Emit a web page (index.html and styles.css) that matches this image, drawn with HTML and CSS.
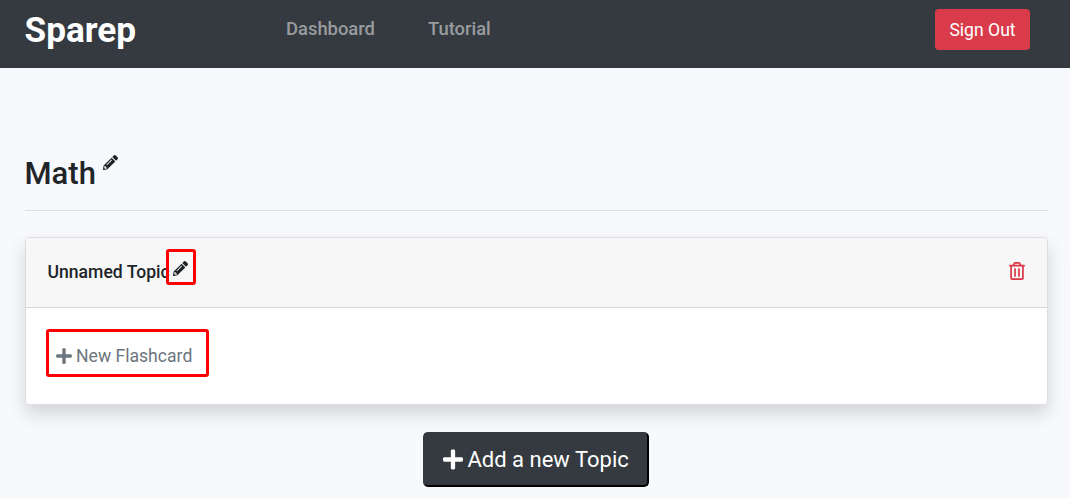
FILE: index.html
```html
<!DOCTYPE html>
<html lang="en">
<head>
<meta charset="utf-8">
<title>Sparep</title>
<link rel="stylesheet" href="styles.css">
</head>
<body>
<svg class="symbols" aria-hidden="true">
  <symbol id="pencil" viewBox="0 0 512 512"><path fill-rule="evenodd" d="M498 142l-46 46c-5 5-13 5-17 0L324 77c-5-5-5-12 0-17l46-46c19-19 49-19 68 0l60 60c19 19 19 49 0 68zm-214-42L22 362 0 484c-3 16 12 30 28 28l122-22 262-262c5-5 5-13 0-17L301 100c-4-5-12-5-17 0zM124 340c-5-6-5-14 0-20l154-154c6-5 14-5 20 0s5 14 0 20L144 340c-6 5-14 5-20 0zm-36 84h48v36l-64 12-32-32 12-65h36v49z"/></symbol>
  <symbol id="plus" viewBox="0 0 448 512"><path d="M416 208H272V64c0-18-14-32-32-32h-32c-18 0-32 14-32 32v144H32c-18 0-32 14-32 32v32c0 18 14 32 32 32h144v144c0 18 14 32 32 32h32c18 0 32-14 32-32V304h144c18 0 32-14 32-32v-32c0-18-14-32-32-32z"/></symbol>
  <symbol id="trash" viewBox="0 0 448 512"><path fill-rule="evenodd" d="M268 416h24a12 12 0 0 0 12-12V188a12 12 0 0 0-12-12h-24a12 12 0 0 0-12 12v216a12 12 0 0 0 12 12zM432 80h-82l-34-57A48 48 0 0 0 275 0H173a48 48 0 0 0-41 23L98 80H16A16 16 0 0 0 0 96v16a16 16 0 0 0 16 16h16v336a48 48 0 0 0 48 48h288a48 48 0 0 0 48-48V128h16a16 16 0 0 0 16-16V96a16 16 0 0 0-16-16zM172 51a6 6 0 0 1 5-3h94a6 6 0 0 1 5 3l17 29H155zM368 464H80V128h288zM156 416h24a12 12 0 0 0 12-12V188a12 12 0 0 0-12-12h-24a12 12 0 0 0-12 12v216a12 12 0 0 0 12 12z"/></symbol>
</svg>
<header class="navbar">
  <a class="brand">Sparep</a>
  <nav class="links"><a>Dashboard</a><a>Tutorial</a></nav>
  <button class="sign-out">Sign Out</button>
</header>
<main class="content">
  <div class="subject">
    <h1>Math</h1>
    <svg class="pencil"><use href="#pencil"/></svg>
  </div>
  <section class="card">
    <div class="card-header">
      <h2>Unnamed Topic</h2>
      <span class="edit"><svg class="pencil"><use href="#pencil"/></svg></span>
      <svg class="trash"><use href="#trash"/></svg>
    </div>
    <div class="card-body">
      <button class="new-card"><svg><use href="#plus"/></svg>New Flashcard</button>
    </div>
  </section>
  <button class="add-topic"><svg><use href="#plus"/></svg>Add a new Topic</button>
</main>
</body>
</html>
```

FILE: styles.css
```css
* { box-sizing: border-box; }
body {
  margin: 0;
  height: 498px;
  overflow: hidden;
  background: #f8f9fd;
  color: #212529;
  font-family: Roboto, sans-serif;
  font-size: 17.6px;
}
h1, h2 { margin: 0; font-weight: 500; }
button { font-family: inherit; padding: 0; }
svg { fill: currentColor; flex: none; }
.symbols { position: absolute; width: 0; height: 0; }
.navbar {
  display: flex;
  align-items: flex-start;
  height: 68px;
  padding: 9px 40px 0 24.5px;
  background: #343a40;
}
.brand {
  width: 261.5px;
  color: #fff;
  font-size: 35.2px;
  font-weight: 700;
  line-height: 42px;
}
.links {
  display: flex;
  gap: 53px;
  color: #999c9f;
  font-size: 18.4px;
  font-weight: 500;
  line-height: 40px;
}
.sign-out {
  width: 95px;
  height: 41px;
  margin-left: auto;
  border: 0;
  border-radius: 4px;
  background: #d93b4a;
  color: #fff;
  font-size: 17.6px;
}
.content {
  display: flex;
  flex-direction: column;
  padding: 84px 22px 0 25px;
}
.subject {
  display: flex;
  gap: 7px;
  height: 59px;
  border-bottom: 1px solid #dddee2;
}
.subject h1 { margin-left: -.5px; font-size: 31px; line-height: 44px; }
.pencil { width: 15px; height: 15px; }
.subject .pencil { margin-top: 3px; }
.card {
  height: 168px;
  margin-top: 26px;
  border: 1px solid #dcdddf;
  border-radius: 4px;
  background: #fff;
  box-shadow: 0 9px 18px rgba(0, 0, 0, .15);
}
.card-header {
  display: flex;
  align-items: center;
  height: 70px;
  padding: 0 22px 0 21.5px;
  border-bottom: 1px solid #d8d8d8;
  border-radius: 3px 3px 0 0;
  background: #f7f7f7;
}
.card-header h2 { width: 122px; margin-top: -1px; font-size: 17.6px; line-height: 22px; white-space: nowrap; }
.edit {
  z-index: 1;
  display: flex;
  align-items: center;
  justify-content: center;
  width: 30px;
  height: 36px;
  margin: -12px 0 0 -4px;
  border: 3px solid #f00;
  border-radius: 3px;
}
.edit .pencil { margin-top: 4px; }
.trash { width: 16px; height: 18px; margin: -3px 0 0 auto; color: #dc3545; }
.card-body { padding: 21px 19.5px; }
.new-card {
  display: flex;
  align-items: center;
  gap: 4px;
  width: 163px;
  height: 48px;
  padding: 5px 0 0 7.5px;
  border: 3px solid #f00;
  border-radius: 3px;
  background: none;
  color: #6c757d;
  font-size: 17.6px;
}
.new-card svg { width: 16px; height: 18px; }
.add-topic {
  display: flex;
  align-self: center;
  align-items: center;
  gap: 5px;
  width: 226px;
  height: 55px;
  margin: 27px 1px 0 0;
  padding-left: 17.5px;
  border: 2px solid;
  border-color: #343a40 #000 #000 #343a40;
  border-radius: 5px;
  background: #343a40;
  color: #fff;
  font-size: 22px;
}
.add-topic svg { width: 20px; height: 23px; }
```
